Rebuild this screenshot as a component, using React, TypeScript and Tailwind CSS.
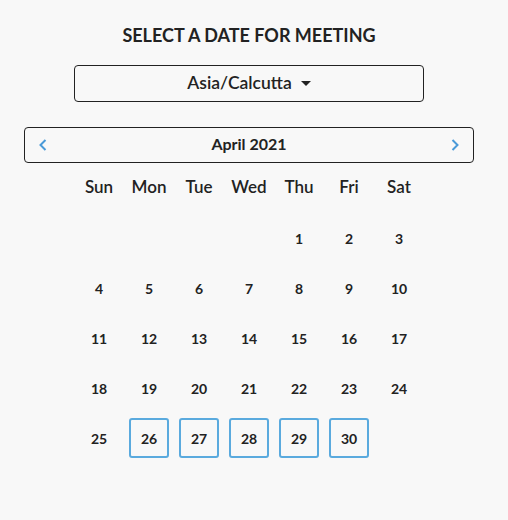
import React from "react";

const days = ["Sun", "Mon", "Tue", "Wed", "Thu", "Fri", "Sat"];

export default function App() {
  const cells: (number | null)[] = [null, null, null, null];
  for (let i = 1; i <= 30; i++) cells.push(i);
  return (
    <div
      className="w-[508px] h-[520px] bg-[#f8f8f8] text-[#222222]"
      style={{ fontFamily: "Lato, 'Open Sans', sans-serif" }}
    >
      <div className="w-[450px] ml-[24px] flex flex-col items-center">
        <h1 className="mt-[24px] h-[22px] leading-[22px] text-[18px] font-bold">
          SELECT A DATE FOR MEETING
        </h1>
        <button className="mt-[19px] w-[350px] h-[37px] border border-[#222222] rounded-[4px] flex items-center justify-center gap-[9px] text-[17.5px] font-semibold bg-transparent">
          <span>Asia/Calcutta</span>
          <svg width="10" height="6" viewBox="0 0 10 6">
            <path d="M0 0 L10 0 L5 5 Z" fill="#222222" />
          </svg>
        </button>
        <div className="mt-[25px] w-[450px] h-[36px] border border-[#222222] rounded-[4px] flex items-center justify-between px-[13px]">
          <svg width="10" height="14" viewBox="0 0 10 14">
            <path d="M7.5 2 L2.5 7 L7.5 12" fill="none" stroke="#4a9ad8" strokeWidth="2" />
          </svg>
          <span className="text-[16px] font-bold leading-[16px] -mt-[2px]">April 2021</span>
          <svg width="10" height="14" viewBox="0 0 10 14">
            <path d="M2.5 2 L7.5 7 L2.5 12" fill="none" stroke="#4a9ad8" strokeWidth="2" />
          </svg>
        </div>
        <div className="w-[350px] grid grid-cols-7">
          {days.map((d) => (
            <div key={d} className="h-[50px] flex items-center justify-center text-[17px] font-semibold">
              <span className="-mt-[2px]">{d}</span>
            </div>
          ))}
          {cells.map((c, i) => (
            <div key={i} className="h-[50px] flex items-center justify-center">
              {c !== null &&
                (c >= 26 ? (
                  <div className="w-[40px] h-[40px] border-2 border-[#5aaade] rounded-[3px] flex items-center justify-center text-[14px] font-bold">
                    {c}
                  </div>
                ) : (
                  <span className="text-[14px] font-bold">{c}</span>
                ))}
            </div>
          ))}
        </div>
      </div>
    </div>
  );
}
